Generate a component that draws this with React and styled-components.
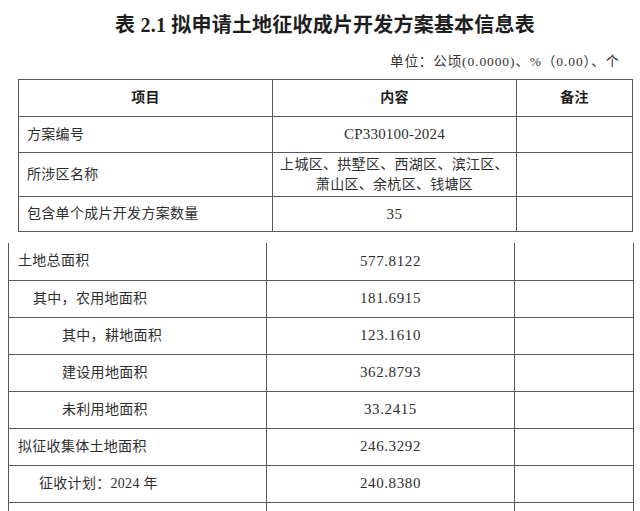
import React from "react";
import styled, { createGlobalStyle } from "styled-components";

const Global = createGlobalStyle`
  html, body { margin: 0; padding: 0; background: #fff; overflow: hidden; }
  body { font-family: "Liberation Serif", "Noto Sans CJK SC", serif; color: #2a2a2a; }
`;

const Page = styled.div`
  width: 640px;
  height: 511px;
  overflow: hidden;
  display: flex;
  flex-direction: column;
`;

const Title = styled.h1`
  margin: 12px 0 0;
  font-size: 20px;
  line-height: 26px;
  font-weight: 700;
  letter-spacing: 0.2px;
  text-align: center;
  padding-left: 10px;
  color: #1e1e1e;
`;

const Unit = styled.div`
  margin-top: 15px;
  align-self: flex-end;
  padding-right: 20px;
  font-size: 13.5px;
  line-height: 18px;
  letter-spacing: 0.9px;
  color: #333;
`;

const Table = styled.table`
  border-collapse: collapse;
  table-layout: fixed;
  margin-left: ${(p) => p.$left}px;
  margin-top: ${(p) => p.$top}px;
  width: ${(p) => p.$width}px;
`;

const Col = styled.col`
  width: ${(p) => p.$w}px;
`;

const Row = styled.tr`
  height: ${(p) => p.$h}px;
`;

const Cell = styled.td`
  border: 1px solid #595959;
  ${(p) => (p.$openTop ? "border-top: none;" : "")}
  padding: 0 0 0 ${(p) => p.$pad ?? 0}px;
  font-size: 14px;
  letter-spacing: 0.3px;
  line-height: 20px;
  text-align: ${(p) => (p.$center ? "center" : "left")};
  vertical-align: middle;
  color: #2e2e2e;
  white-space: nowrap;
`;

const HeadCell = styled(Cell).attrs({ as: "th" })`
  font-weight: 700;
  text-align: center;
  color: #1e1e1e;
`;

const Num = styled.span`
  font-family: "Liberation Serif", serif;
  font-size: 15px;
  letter-spacing: 0.6px;
`;

const Code = styled.span`
  font-family: "Liberation Serif", serif;
  font-size: 15px;
  letter-spacing: 0.2px;
`;

const topRows = [
  { h: 36, label: "方案编号", value: <Code>CP330100-2024</Code> },
  {
    h: 44,
    label: "所涉区名称",
    value: (
      <>
        上城区、拱墅区、西湖区、滨江区、
        <br />
        萧山区、余杭区、钱塘区
      </>
    ),
  },
  { h: 35, label: "包含单个成片开发方案数量", value: <Num>35</Num> },
];

const areaRows = [
  { pad: 9, label: "土地总面积", value: "577.8122" },
  { pad: 24, label: "其中，农用地面积", value: "181.6915" },
  { pad: 53, label: "其中，耕地面积", value: "123.1610" },
  { pad: 53, label: "建设用地面积", value: "362.8793" },
  { pad: 53, label: "未利用地面积", value: "33.2415" },
  { pad: 9, label: "拟征收集体土地面积", value: "246.3292" },
  { pad: 30, label: "征收计划：2024 年", value: "240.8380" },
  { pad: 9, label: "", value: "" },
];

export default function App() {
  return (
    <Page>
      <Global />
      <Title>表 2.1 拟申请土地征收成片开发方案基本信息表</Title>
      <Unit>单位：公顷(0.0000)、%（0.00）、个</Unit>
      <Table $left={18} $top={8} $width={614}>
        <colgroup>
          <Col $w={254} />
          <Col $w={244} />
          <Col $w={116} />
        </colgroup>
        <tbody>
          <Row $h={37}>
            <HeadCell>项目</HeadCell>
            <HeadCell>内容</HeadCell>
            <HeadCell>备注</HeadCell>
          </Row>
          {topRows.map((r) => (
            <Row key={r.label} $h={r.h}>
              <Cell $pad={8}>{r.label}</Cell>
              <Cell $center>{r.value}</Cell>
              <Cell />
            </Row>
          ))}
        </tbody>
      </Table>
      <Table $left={8} $top={11} $width={625}>
        <colgroup>
          <Col $w={258} />
          <Col $w={248} />
          <Col $w={119} />
        </colgroup>
        <tbody>
          {areaRows.map((r, i) => (
            <Row key={i} $h={37}>
              <Cell $pad={r.pad} $openTop={i === 0}>{r.label}</Cell>
              <Cell $center $openTop={i === 0}>
                <Num>{r.value}</Num>
              </Cell>
              <Cell $openTop={i === 0} />
            </Row>
          ))}
        </tbody>
      </Table>
    </Page>
  );
}
